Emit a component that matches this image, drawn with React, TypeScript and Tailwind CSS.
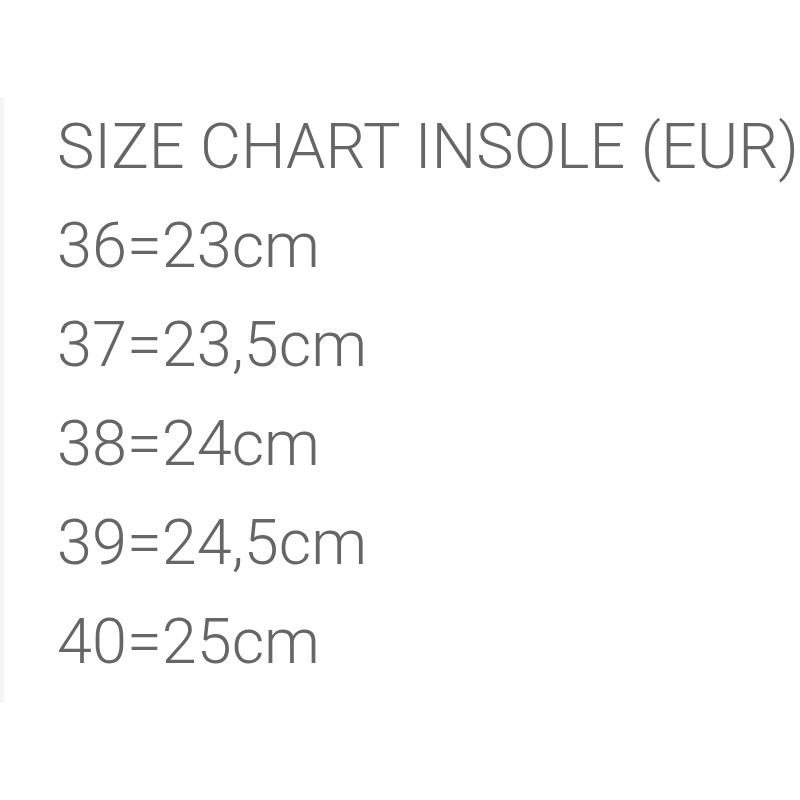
export default function App() {
  const rows = ["36=23cm", "37=23,5cm", "38=24cm", "39=24,5cm", "40=25cm"];
  return (
    <div className="h-[800px] w-[800px] overflow-hidden bg-white">
      <div
        className="mt-[97px] border-l-4 border-[#f5f5f5] pb-3 pl-[53px] text-[63px] font-light leading-[99px] text-[#666666] whitespace-nowrap"
        style={{ fontFamily: "Roboto, 'Liberation Sans', sans-serif" }}
      >
        <div>SIZE CHART INSOLE (EUR)</div>
        {rows.map((r) => (
          <div key={r}>{r}</div>
        ))}
      </div>
    </div>
  );
}
